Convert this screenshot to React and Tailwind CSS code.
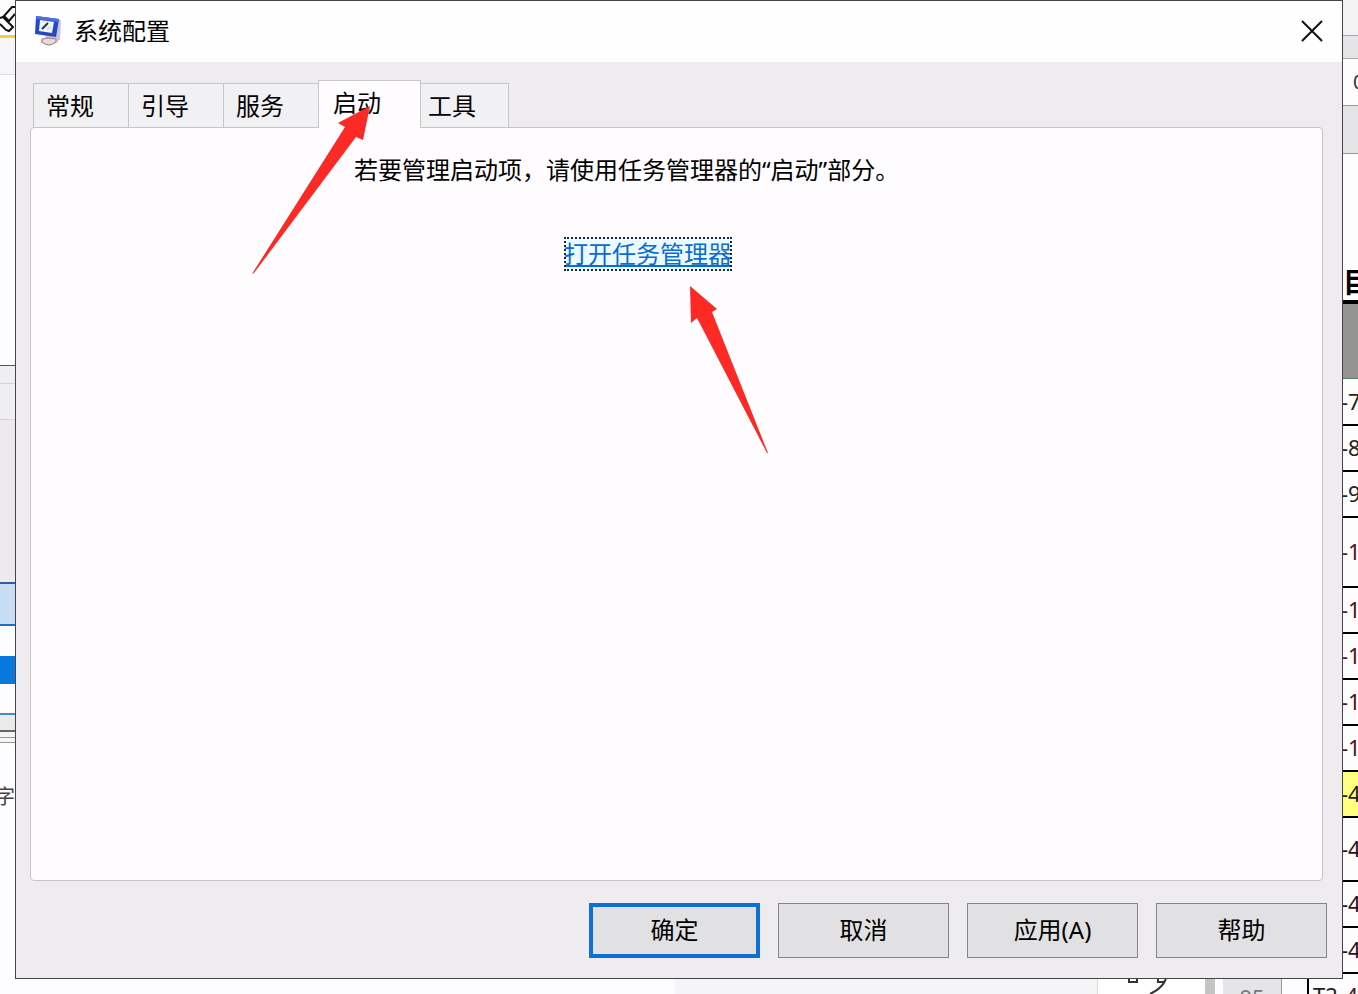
// src/App.jsx
import { useState } from "react";

const TABS = [
  { name: "常规", className: "pl-3" },
  { name: "引导", className: "pl-3" },
  { name: "服务", className: "pl-3" },
  { name: "启动", className: "pl-[14px]" },
  { name: "工具", className: "pl-[14px]" },
];

const SHEET_ROWS = [
  { text: "-7", className: "h-[47px] text-[#222]" },
  { text: "-8", className: "h-[46px] text-[#222]" },
  { text: "-9", className: "h-[46px] text-[#222]" },
  { text: "-1", className: "h-[70px] text-[#4a1420]" },
  { text: "-1", className: "h-[46px] text-[#4a1420]" },
  { text: "-1", className: "h-[46px] text-[#4a1420]" },
  { text: "-1", className: "h-[46px] text-[#4a1420]" },
  { text: "-1", className: "h-[46px] text-[#4a1420]" },
  { text: "-4", className: "h-[46px] bg-[#ffff80] text-[#222]" },
  { text: "-4", className: "h-[64px] text-[#2c1018]" },
  { text: "-4", className: "h-[46px] text-[#2c1018]" },
  { text: "-4", className: "h-[46px] text-[#2c1018]" },
];

const ConfigIcon = () => (
  <svg width="28" height="32" viewBox="0 0 28 32" aria-hidden="true">
    <path d="M23 4 L27 5 L26 25 L21 25 Z" fill="#c9c3d6" />
    <path d="M11 20 L21 20 L25 23 L24 27 L16 30 L7 28 L7 25 L12 24 Z" fill="#d3c4ca" />
    <path d="M8 24 Q14 22 22 24 Q23 29 15 30 Q7 29 8 24 Z" fill="#ead9d6" stroke="#8c7f88" />
    <path d="M2 1 L25 4 L22 22 L1 19 Z" fill="#2448c8" />
    <path d="M2 1 L25 4 L24 7 L2 4 Z" fill="#4b6fdb" />
    <path d="M6 5 L20 7 L18 18 L5 16 Z" fill="#f2f6fb" />
    <path d="M8 14 L14 8" stroke="#26304e" strokeWidth="2" />
    <path d="M13 14 L17 12" stroke="#b9c4d8" />
  </svg>
);

const CloseIcon = () => (
  <svg width="22" height="22" viewBox="0 0 22 22" aria-hidden="true">
    <path d="M1 1 L21 21 M21 1 L1 21" stroke="#111" strokeWidth="2" />
  </svg>
);

const LeftEdge = () => (
  <div className="w-[15px] shrink-0 overflow-hidden bg-[#fdfcfe]">
    <div className="h-[35px]">
      <svg width="15" height="35" viewBox="0 0 15 35" aria-hidden="true">
        <path
          d="M15 7 L12 7 L4 16 L9 21 L15 14 M0 18 L3 17 L13 27 L9 31 L6 30 L0 24"
          fill="none"
          stroke="#111"
          strokeWidth="2"
        />
      </svg>
    </div>
    <div className="h-[3px] bg-[#f5cf2e]" />
    <div className="h-[37px] border-b border-[#ddd] bg-[#f6f5f8]" />
    <div className="h-[291px] border-b border-[#555]" />
    <div className="h-[18px] border-b border-[#d4d4d6] bg-[#efeef0]" />
    <div className="h-9 border-b border-[#d4d4d6] bg-[#efeef0]" />
    <div className="h-[164px] border-b-2 border-[#2d5f9e] bg-[#eceaed]" />
    <div className="h-[42px] border-b-2 border-[#1d6fc7] bg-[#c8dcf4]" />
    <div className="h-[30px]" />
    <div className="h-7 bg-[#0878dc]" />
    <div className="h-[31px] border-b-2 border-[#3f8fd0]" />
    <div className="h-[17px] border-b-2 border-[#666] bg-[#ebebed]" />
    <div className="h-[6px] border-b border-[#999] bg-[#f5f5f5]" />
    <div className="h-[5px] border-b border-[#999] bg-[#f5f5f5]" />
    <div className="flex h-[68px] items-end justify-end text-xl text-[#444]">字</div>
  </div>
);

const RightEdge = () => (
  <div className="w-[15px] shrink-0 overflow-hidden bg-[#fdfdfd]">
    <div className="h-9 border-b border-[#aaa] bg-[#f3f3f4]" />
    <div className="h-[23px] border-b border-[#aaa] bg-[#e5e5e7]" />
    <div className="flex h-[47px] items-center border-b border-[#999] pl-[10px] text-xl text-[#333]">
      0
    </div>
    <div className="h-12 border-b border-[#999] bg-[#e4e4e7]" />
    <div className="flex h-[150px] items-end border-b-4 border-black text-[28px] leading-9 font-bold">
      目
    </div>
    <div className="h-[75px] border-b border-[#5c7a5c] bg-[#939391]" />
    {SHEET_ROWS.map((row, i) => (
      <div
        key={i}
        className={`flex items-center border-b-2 border-black text-[22px] ${row.className}`}
      >
        <span className="-ml-0.5">{row.text}</span>
      </div>
    ))}
  </div>
);

const BottomEdge = () => (
  <div className="flex h-[15px] shrink-0 overflow-hidden bg-[#fdfcfe] text-[22px] leading-6 text-[#222]">
    <div className="w-[675px]" />
    <div className="flex-1 border-r border-[#ddd] bg-[#f5f4f6]" />
    <div className="w-[107px] bg-white">
      <svg width="107" height="15" viewBox="0 0 107 15" aria-hidden="true">
        <path
          d="M31 0 V3 H39 V0 M60 0 V3 H66 L68 0 M67 2 Q63 10 52 15"
          fill="none"
          stroke="#333"
          strokeWidth="2"
        />
      </svg>
    </div>
    <div className="w-[10px] bg-[#c4c4c6]" />
    <div className="ml-2 w-[59px] border-r border-[#999] bg-[#e5e5e7] pt-1.5 text-center text-[#777]">
      95
    </div>
    <div className="ml-[25px] flex w-[51px] justify-between border-l-2 border-black pt-1 pl-1">
      <span>T2</span>
      <span className="text-[#4a1420]">4</span>
    </div>
  </div>
);

const Button = ({ children, primary, onClick }) => (
  <button
    type="button"
    onClick={onClick}
    className={`h-[55px] w-[171px] bg-[#e1e0e2] pb-0.5 ${
      primary ? "border-4 border-[#0f6fd8]" : "border border-[#858587]"
    }`}
  >
    {children}
  </button>
);

const App = () => {
  const [active, setActive] = useState("启动");

  return (
    <div className="flex min-h-screen flex-col bg-white font-['Noto_Sans','Noto_Sans_CJK_SC',sans-serif] text-2xl text-black">
      <div className="flex flex-1">
        <LeftEdge />

        <main className="flex min-w-0 flex-1 flex-col border border-[#454547] bg-[#eeecef]">
          <header className="flex h-[61px] items-center bg-[#fefdff] pr-[19px] pb-0.5 pl-[18px]">
            <ConfigIcon />
            <h1 className="ml-3 flex-1">系统配置</h1>
            <button type="button" aria-label="关闭">
              <CloseIcon />
            </button>
          </header>

          <div className="flex flex-1 flex-col pt-[18px] pr-[19px] pl-[14px]">
            <div role="tablist" className="flex items-end pl-[3px]">
              {TABS.map((tab) => {
                const selected = tab.name === active;
                return (
                  <div key={tab.name} className={selected ? "relative z-10 -mr-2 -mb-px" : "-mr-px"}>
                    <button
                      type="button"
                      role="tab"
                      aria-selected={selected}
                      onClick={() => setActive(tab.name)}
                      className={`border border-b-0 border-[#c6c5c8] text-left ${tab.className} ${
                        selected ? "h-12 w-[103px] bg-[#fefcff] pb-1" : "h-11 w-24 bg-[#f1f0f2]"
                      }`}
                    >
                      {tab.name}
                    </button>
                    {tab.name === "启动" && (
                      <svg
                        className="pointer-events-none absolute top-[25px] left-[-67px]"
                        width="120"
                        height="170"
                        viewBox="0 0 120 170"
                        aria-hidden="true"
                      >
                        <path d="M119 1 L87 18 L94 22 L1 169 L3 168 L105 32 L112 35 Z" fill="#fb2a24" />
                      </svg>
                    )}
                  </div>
                );
              })}
            </div>

            <section
              role="tabpanel"
              className="flex-1 rounded-sm border border-[#c6c5c8] bg-[#fefcff] pt-6"
            >
              <p className="pl-[323px] leading-9">若要管理启动项，请使用任务管理器的“启动”部分。</p>
              <div className="relative mt-[49px] ml-[533px] w-fit">
                <a
                  href="#taskmgr"
                  className="block bg-[#eafaff] leading-[34px] text-[#0b6bd0] underline decoration-2 underline-offset-2 outline-2 -outline-offset-2 outline-[#1b2a44] outline-dotted"
                >
                  打开任务管理器
                </a>
                <svg
                  className="pointer-events-none absolute top-[49px] left-[126px]"
                  width="80"
                  height="170"
                  viewBox="0 0 80 170"
                  aria-hidden="true"
                >
                  <path d="M0 0 L27 23 L22 26 L78 167 L77 167 L7 32 L1 37 Z" fill="#fb2a24" />
                </svg>
              </div>
            </section>
          </div>

          <footer className="flex justify-end gap-[18px] px-[15px] pt-[22px] pb-5">
            <Button primary>确定</Button>
            <Button>取消</Button>
            <Button>应用(A)</Button>
            <Button>帮助</Button>
          </footer>
        </main>

        <RightEdge />
      </div>
      <BottomEdge />
    </div>
  );
};

export default App;
